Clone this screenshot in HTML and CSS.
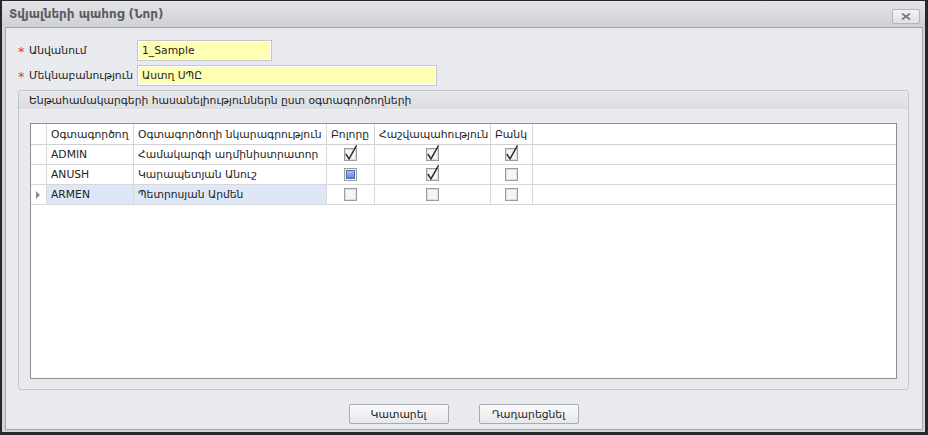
FILE: index.html
```html
<!DOCTYPE html>
<html>
<head>
<meta charset="utf-8">
<title>Տվյալների պահոց (Նոր)</title>
<link rel="stylesheet" href="styles.css">
</head>
<body>
<div class="window">
  <div class="titlebar">
    <span class="title">Տվյալների պահոց (Նոր)</span>
    <span class="close"><svg width="10" height="7" viewBox="0 0 10 7"><path d="M1 0.5 L9 6.5 M9 0.5 L1 6.5" stroke="#7b7b84" stroke-width="1.8" fill="none"/></svg></span>
  </div>
  <div class="panel">
    <div class="fields">
      <div class="field">
        <span class="label"><span class="req">*</span>Անվանում</span>
        <div class="input w1"><span class="val">1_Sample</span></div>
      </div>
      <div class="field">
        <span class="label"><span class="req">*</span>Մեկնաբանություն</span>
        <div class="input w2"><span class="val">Աստղ ՍՊԸ</span></div>
      </div>
    </div>
    <div class="group">
      <div class="group-head">Ենթահամակարգերի հասանելիություններն ըստ օգտագործողների</div>
      <div class="group-body">
        <div class="grid">
          <div class="row head">
            <div class="cell ind"></div>
            <div class="cell">Օգտագործող</div>
            <div class="cell">Օգտագործողի նկարագրություն</div>
            <div class="cell">Բոլորը</div>
            <div class="cell">Հաշվապահություն</div>
            <div class="cell">Բանկ</div>
            <div class="cell fill"></div>
          </div>
          <div class="row">
            <div class="cell ind"></div>
            <div class="cell">ADMIN</div>
            <div class="cell">Համակարգի ադմինիստրատոր</div>
            <div class="cell ck"><svg class="cb" width="13" height="13" viewBox="0 0 13 13"><rect x="0.5" y="0.5" width="12" height="12" fill="#f5f5f5" stroke="#9c9c9c"/><rect x="1.5" y="1.5" width="10" height="10" fill="none" stroke="#dedede"/><path d="M1.8 6 L5 10.8 L12.6 -2.6" stroke="#2c2c30" stroke-width="1.5" fill="none"/></svg></div>
            <div class="cell ck"><svg class="cb" width="13" height="13" viewBox="0 0 13 13"><rect x="0.5" y="0.5" width="12" height="12" fill="#f5f5f5" stroke="#9c9c9c"/><rect x="1.5" y="1.5" width="10" height="10" fill="none" stroke="#dedede"/><path d="M1.8 6 L5 10.8 L12.6 -2.6" stroke="#2c2c30" stroke-width="1.5" fill="none"/></svg></div>
            <div class="cell ck"><svg class="cb" width="13" height="13" viewBox="0 0 13 13"><rect x="0.5" y="0.5" width="12" height="12" fill="#f5f5f5" stroke="#9c9c9c"/><rect x="1.5" y="1.5" width="10" height="10" fill="none" stroke="#dedede"/><path d="M1.8 6 L5 10.8 L12.6 -2.6" stroke="#2c2c30" stroke-width="1.5" fill="none"/></svg></div>
            <div class="cell fill"></div>
          </div>
          <div class="row">
            <div class="cell ind"></div>
            <div class="cell">ANUSH</div>
            <div class="cell">Կարապետյան Անուշ</div>
            <div class="cell ck"><svg class="cb" width="13" height="13" viewBox="0 0 13 13"><defs><linearGradient id="bl" x1="0" y1="0" x2="0" y2="1"><stop offset="0" stop-color="#b4c6f0"/><stop offset="1" stop-color="#5f80d2"/></linearGradient></defs><rect x="0.5" y="0.5" width="12" height="12" fill="#f5f5f5" stroke="#9c9c9c"/><rect x="2.5" y="2.5" width="8" height="8" fill="url(#bl)" stroke="#4d69b8"/></svg></div>
            <div class="cell ck"><svg class="cb" width="13" height="13" viewBox="0 0 13 13"><rect x="0.5" y="0.5" width="12" height="12" fill="#f5f5f5" stroke="#9c9c9c"/><rect x="1.5" y="1.5" width="10" height="10" fill="none" stroke="#dedede"/><path d="M1.8 6 L5 10.8 L12.6 -2.6" stroke="#2c2c30" stroke-width="1.5" fill="none"/></svg></div>
            <div class="cell ck"><svg class="cb" width="13" height="13" viewBox="0 0 13 13"><rect x="0.5" y="0.5" width="12" height="12" fill="#f5f5f5" stroke="#9c9c9c"/><rect x="1.5" y="1.5" width="10" height="10" fill="none" stroke="#dedede"/></svg></div>
            <div class="cell fill"></div>
          </div>
          <div class="row">
            <div class="cell ind"><span class="tri"></span></div>
            <div class="cell sel">ARMEN</div>
            <div class="cell sel">Պետրոսյան Արմեն</div>
            <div class="cell ck"><svg class="cb" width="13" height="13" viewBox="0 0 13 13"><rect x="0.5" y="0.5" width="12" height="12" fill="#f5f5f5" stroke="#9c9c9c"/><rect x="1.5" y="1.5" width="10" height="10" fill="none" stroke="#dedede"/></svg></div>
            <div class="cell ck"><svg class="cb" width="13" height="13" viewBox="0 0 13 13"><rect x="0.5" y="0.5" width="12" height="12" fill="#f5f5f5" stroke="#9c9c9c"/><rect x="1.5" y="1.5" width="10" height="10" fill="none" stroke="#dedede"/></svg></div>
            <div class="cell ck"><svg class="cb" width="13" height="13" viewBox="0 0 13 13"><rect x="0.5" y="0.5" width="12" height="12" fill="#f5f5f5" stroke="#9c9c9c"/><rect x="1.5" y="1.5" width="10" height="10" fill="none" stroke="#dedede"/></svg></div>
            <div class="cell fill"></div>
          </div>
        </div>
      </div>
    </div>
    <div class="buttons">
      <span class="btn">Կատարել</span>
      <span class="btn">Դադարեցնել</span>
    </div>
  </div>
</div>
</body>
</html>
```
FILE: styles.css
```css
* { box-sizing: border-box; }
html, body { margin: 0; padding: 0; }
body {
  background: #26272b;
  font-family: "DejaVu Sans", "Liberation Sans", sans-serif;
  font-size: 10.75px;
  color: #1e1e22;
}
.window {
  width: 928px;
  height: 435px;
  border-style: solid;
  border-color: #26272b;
  border-width: 1px 3px 3px 2px;
  background: #d3d4d8;
  display: flex;
  flex-direction: column;
}
.titlebar {
  height: 26px;
  flex: none;
  display: flex;
  align-items: flex-start;
  justify-content: space-between;
  background: linear-gradient(#e3e4e8, #d0d1d5);
  padding: 0 5px 0 7px;
}
.title {
  font-weight: bold;
  font-size: 12px;
  color: #5c5c60;
  line-height: 27px;
}
.close {
  margin-top: 8px;
  width: 28px;
  height: 15px;
  border: 1px solid #b4b5bb;
  border-radius: 2px;
  background: linear-gradient(#f3f3f5, #dfe0e4);
  display: flex;
  align-items: center;
  justify-content: center;
}
.close svg { display: block; }
.panel {
  flex: none;
  height: 403px;
  margin: 0 2px 0 3px;
  border: 1px solid #a6a7ad;
  background: #e9eaee;
  padding: 12px 13px 5px 12px;
  display: flex;
  flex-direction: column;
}
.fields {
  display: flex;
  flex-direction: column;
  gap: 4px;
}
.field {
  display: flex;
  align-items: center;
  height: 21px;
}
.label {
  width: 119px;
  flex: none;
  display: flex;
  align-items: center;
  white-space: nowrap;
}
.req {
  color: #e23a3f;
  width: 11px;
  font-size: 13px;
  position: relative;
  top: 1px;
}
.input {
  height: 21px;
  border: 1px solid #c6c7cc;
  background: #fff;
  padding: 1px;
  display: flex;
}
.w1 { width: 135px; }
.w2 { width: 300px; }
.val {
  flex: 1;
  background: #ffffb3;
  padding-left: 3px;
  line-height: 17px;
  white-space: nowrap;
}
.group {
  margin-top: 4px;
  height: 300px;
  border: 1px solid #c5c6cb;
  border-radius: 3px;
  display: flex;
  flex-direction: column;
}
.group-head {
  height: 19px;
  flex: none;
  padding-left: 10px;
  line-height: 19px;
  background: linear-gradient(#e8e9ed, #dcdde1);
  border-bottom: 1px solid #eeeff2;
  border-radius: 3px 3px 0 0;
  white-space: nowrap;
}
.group-body {
  flex: 1;
  padding: 13px 11px 10px 11px;
  display: flex;
}
.grid {
  flex: 1;
  border: 1px solid #8d8e97;
  background: #fff;
}
.row {
  display: grid;
  grid-template-columns: 16px 87px 193px 48px 116px 42px 1fr;
  height: 20px;
  border-bottom: 1px solid #d8d8dc;
}
.row.head { height: 21px; border-bottom-color: #d0d0d4; }
.cell {
  border-right: 1px solid #d8d8dc;
  padding-left: 4px;
  display: flex;
  align-items: center;
  white-space: nowrap;
  overflow: hidden;
}
.cell.fill { border-right: none; }
.cell.ind { padding-left: 5px; }
.cell.ck { justify-content: center; padding-left: 0; overflow: visible; }
.cell.sel { background: #dde7f6; }
.cb { display: block; overflow: visible; }
.tri {
  width: 0;
  height: 0;
  border-left: 4px solid #8c8c90;
  border-top: 4px solid transparent;
  border-bottom: 4px solid transparent;
}
.buttons {
  margin-top: 14px;
  display: flex;
  justify-content: center;
  gap: 30px;
}
.btn {
  width: 100px;
  height: 20px;
  border: 1px solid #a9aaaf;
  border-radius: 2px;
  background: linear-gradient(#fbfbfc, #e6e7ea);
  display: flex;
  align-items: center;
  justify-content: center;
}
```
